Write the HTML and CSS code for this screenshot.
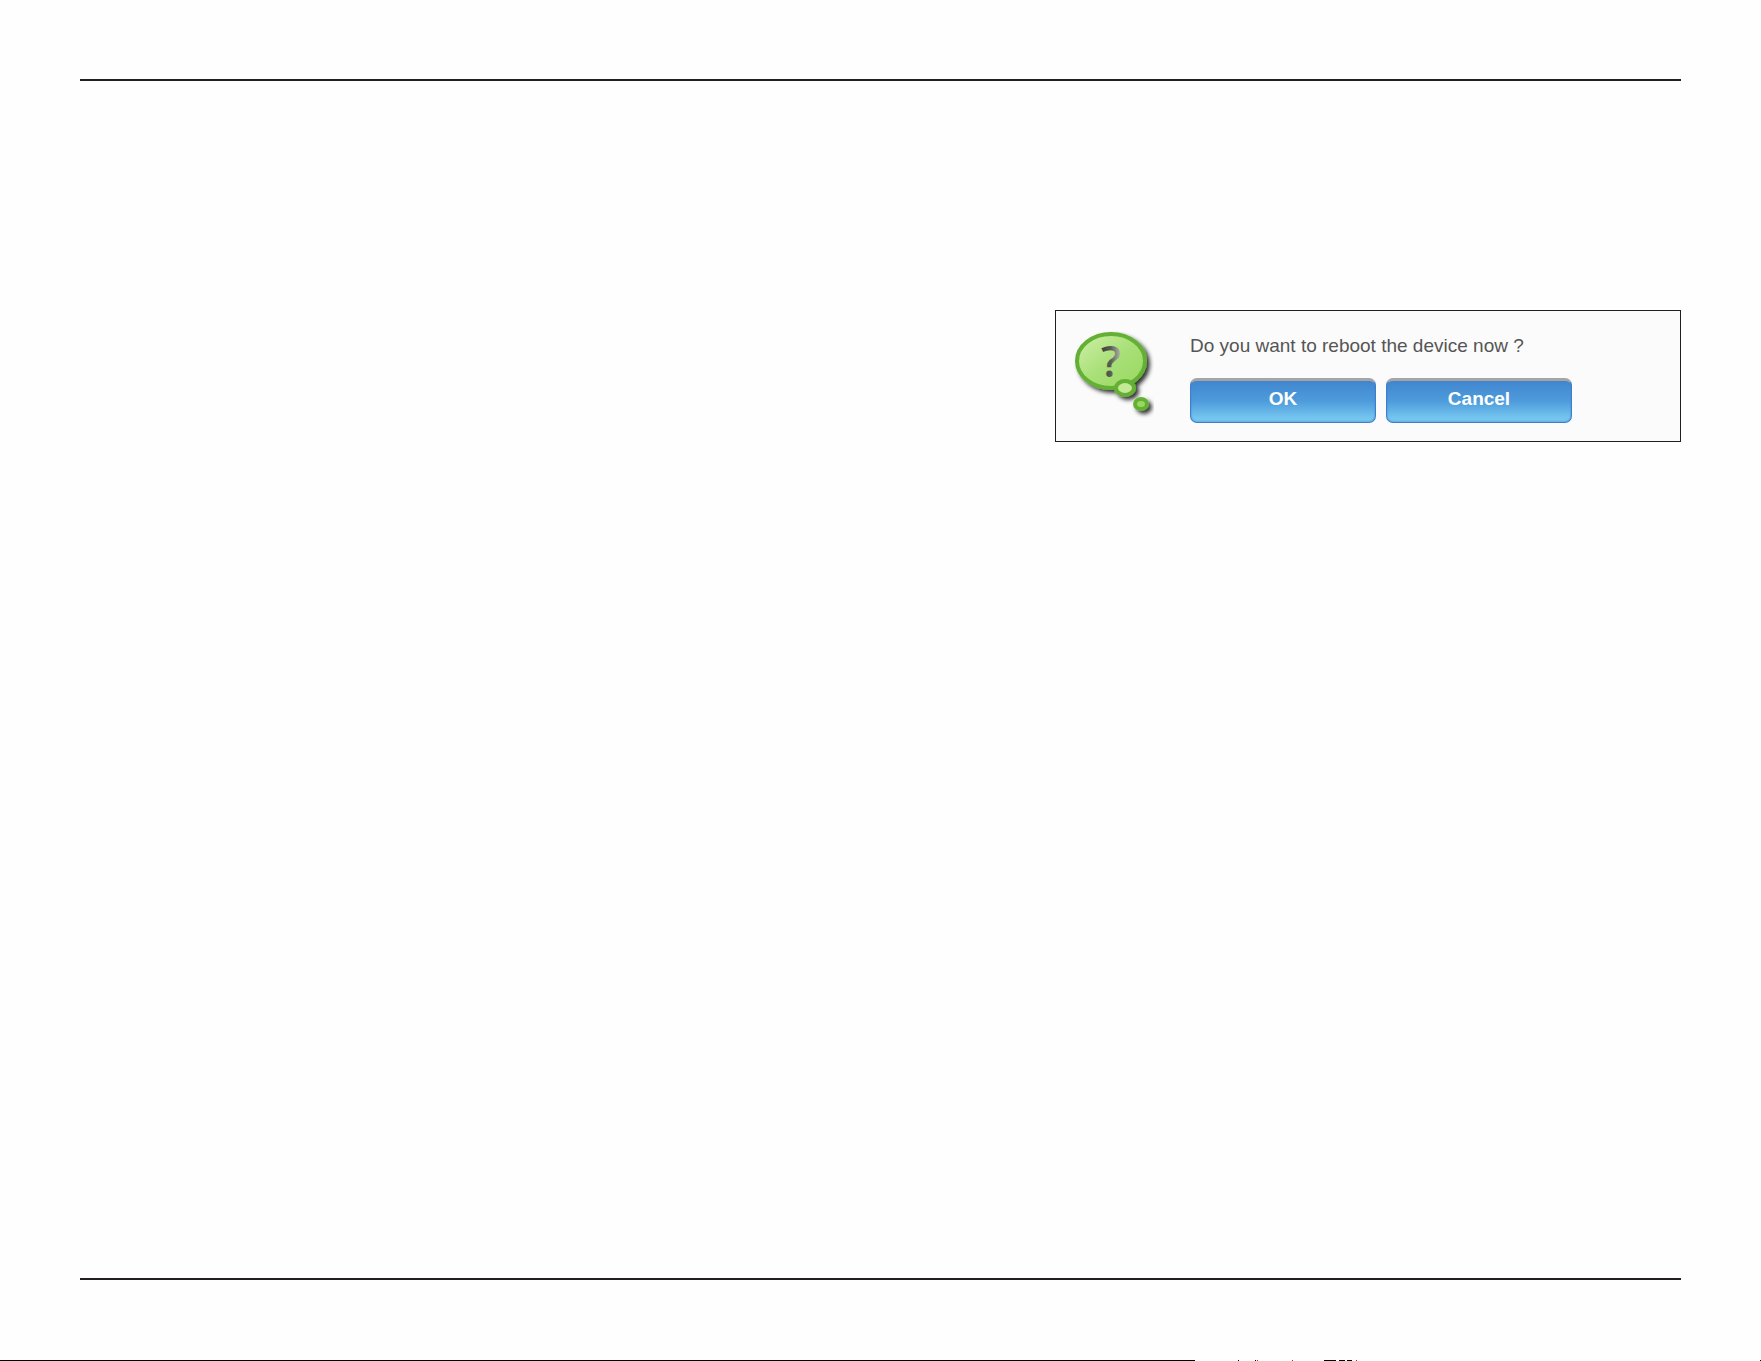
FILE: index.html
```
<!DOCTYPE html>
<html lang="en">
<head>
  <meta charset="UTF-8">
  <title>Reboot Device</title>
  <link rel="stylesheet" href="styles.css">
</head>
<body>

<main class="page">
  <section class="dialog" role="dialog" aria-labelledby="message">
    <svg class="bubble" viewBox="0 0 80 90" aria-hidden="true">
      <defs>
        <linearGradient id="fill" x1="0" y1="0" x2="1" y2="1">
          <stop offset="0" stop-color="#d0f0aa"/>
          <stop offset="0.5" stop-color="#a9e078"/>
          <stop offset="1" stop-color="#98d860"/>
        </linearGradient>
        <linearGradient id="mark" x1="0" y1="0" x2="1" y2="0">
          <stop offset="0" stop-color="#3c4038"/>
          <stop offset="0.5" stop-color="#5a5f56"/>
          <stop offset="1" stop-color="#b4bcae"/>
        </linearGradient>
        <filter id="shadow" x="-20%" y="-20%" width="150%" height="150%">
          <feDropShadow dx="3" dy="3" stdDeviation="2" flood-color="#000" flood-opacity="0.8"/>
        </filter>
      </defs>
      <g filter="url(#shadow)" stroke="#64b035" stroke-width="4">
        <ellipse cx="37" cy="30" rx="34" ry="27" fill="url(#fill)"/>
        <ellipse cx="51" cy="57" rx="9" ry="7" fill="#c3e996"/>
        <ellipse cx="67" cy="73" rx="6" ry="5" fill="#98d860"/>
      </g>
      <text class="mark" x="37" y="46" text-anchor="middle" fill="url(#mark)">?</text>
    </svg>
    <div class="content">
      <p class="message" id="message">Do you want to reboot the device now ?</p>
      <div class="buttons">
        <button type="button">OK</button>
        <button type="button">Cancel</button>
      </div>
    </div>
  </section>
</main>

<footer class="footer">
  <div class="edge"></div>
  <svg class="marks" viewBox="0 0 566 1" preserveAspectRatio="xMinYMax" shape-rendering="crispEdges" aria-hidden="true">
    <path d="M43 0h1v1h-1zM60 0h1v1h-1zM129 0h12v1h-12zM144 0h6v1h-6zM152 0h5v1h-5zM565 0h1v1h-1z" fill="#000"/>
    <path d="M62 0h1v1h-1zM97 0h1v1h-1zM161 0h1v1h-1z" fill="#c22"/>
  </svg>
</footer>

</body>
</html>
```
FILE: styles.css
```
* {
  box-sizing: border-box;
}

body {
  display: flex;
  flex-direction: column;
  min-height: 100vh;
  margin: 0;
  background: #fefefe;
  font-family: "Liberation Sans", Arial, sans-serif;
}

.page {
  flex: 1;
  display: flex;
  justify-content: flex-end;
  align-items: flex-start;
  margin: 79px 80px 0;
  padding-top: 229px;
  border-top: 2px solid #231f20;
  border-bottom: 2px solid #231f20;
}

.dialog {
  display: flex;
  gap: 36px;
  width: 626px;
  padding: 20px 18px 18px;
  border: 1px solid #231f20;
  background: #fbfbfb;
}

.bubble {
  width: 80px;
  height: 90px;
}

.mark {
  font: 600 44px "Open Sans", sans-serif;
}

.message {
  margin: 3px 0 20px;
  font-size: 19px;
  line-height: 24px;
  color: #555;
}

.buttons {
  display: flex;
  gap: 10px;
}

button {
  width: 186px;
  height: 45px;
  padding: 0 0 6px;
  border: 1px solid #3f7dcd;
  border-top: 3px solid #a5a5a5;
  border-radius: 7px;
  background: linear-gradient(#4186cf, #4e9cdc 50%, #75c5ef 90%);
  box-shadow: inset 0 0 2px #4282d0;
  color: white;
  font: bold 19px "Liberation Sans", Arial, sans-serif;
}

.footer {
  display: flex;
  align-items: flex-end;
  height: 81px;
}

.edge {
  flex: 1;
  height: 1px;
  background: black;
}

.marks {
  width: 566px;
  height: 1px;
}
```
